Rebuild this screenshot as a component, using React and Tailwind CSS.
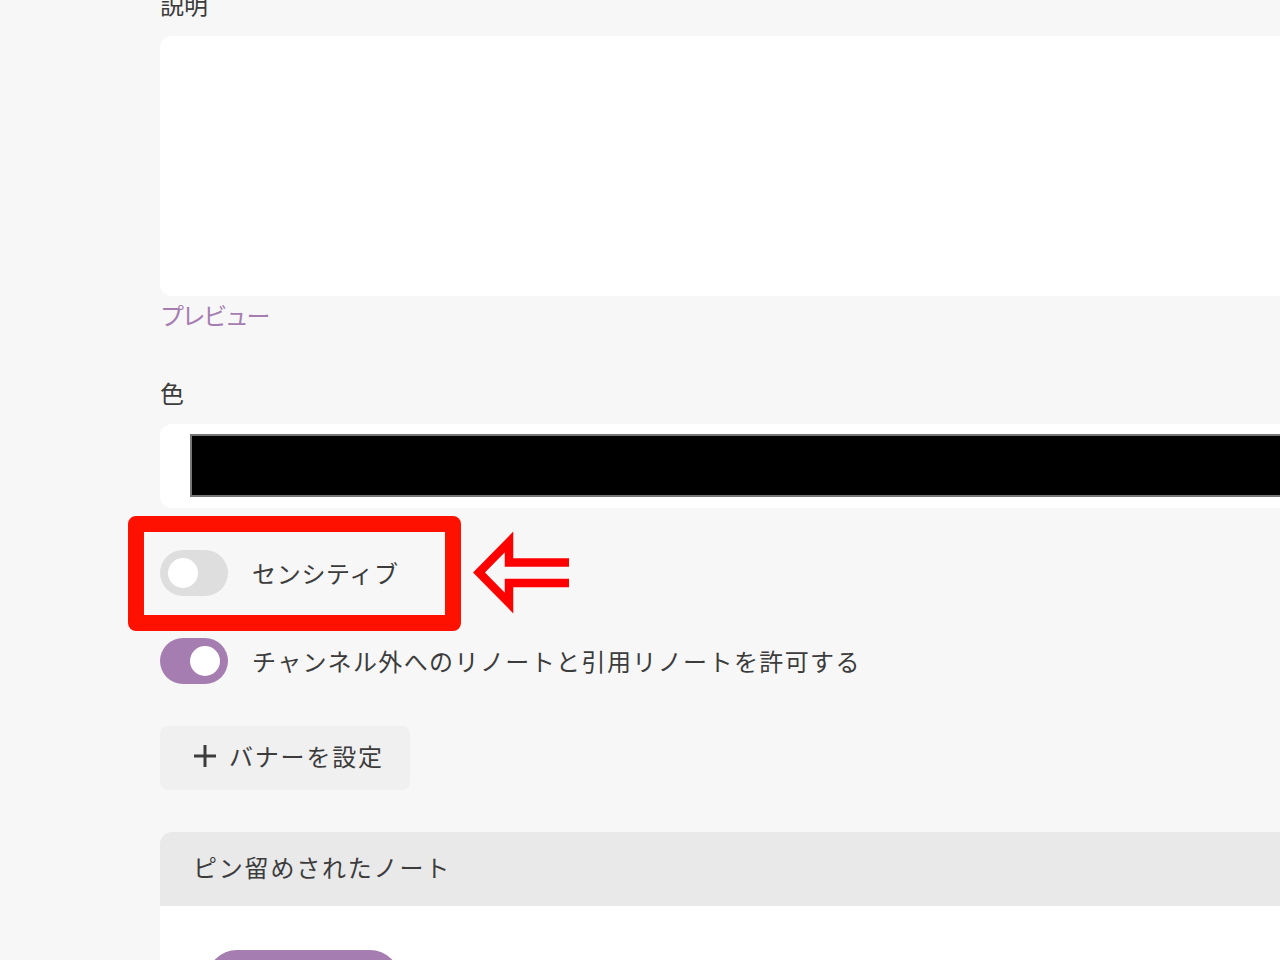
import React from "react";

const font = { fontFamily: '"Noto Sans CJK JP", "Noto Sans", sans-serif' };

function Toggle({ on }) {
  return (
    <div
      className={
        "flex h-[46px] w-[68px] shrink-0 items-center rounded-full px-[8px] " +
        (on ? "justify-end bg-[#a67db0]" : "justify-start bg-[#dedede]")
      }
    >
      <div className="h-[30px] w-[30px] rounded-full bg-white" />
    </div>
  );
}

function SwitchRow({ on, label, tracking }) {
  return (
    <div className="flex items-center gap-[24px] pb-[2px]">
      <Toggle on={on} />
      <span className={"leading-[36px] " + tracking}>{label}</span>
    </div>
  );
}

export default function App() {
  return (
    <div
      className="relative h-[960px] w-[1280px] overflow-hidden bg-[#f7f7f7] text-[24px] text-[#3c3c3c]"
      style={font}
    >
      <div className="ml-[160px] mt-[-14px] flex w-[1200px] flex-col">
        <div className="h-[36px] leading-[36px]">説明</div>
        <div className="mt-[14px] h-[260px] rounded-[12px] bg-white" />
        <div className="mt-[1px] h-[36px] leading-[36px] tracking-[-2.4px] text-[#a67db0]">プレビュー</div>
        <div className="mt-[42px] h-[36px] leading-[36px]">色</div>
        <div className="mt-[13px] flex h-[84px] rounded-[12px] bg-white pb-[11px] pl-[30px] pt-[10px]">
          <div className="w-full border-2 border-[#767676] bg-black" />
        </div>
        <div className="mt-[42px] flex flex-col gap-[40px]">
          <SwitchRow on={false} label="センシティブ" tracking="tracking-[0.7px]" />
          <SwitchRow on={true} label="チャンネル外へのリノートと引用リノートを許可する" tracking="tracking-[1.4px]" />
        </div>
        <div className="mt-[40px] flex h-[64px] w-[250px] items-center gap-[12px] rounded-[8px] bg-[#f0f0f0] pb-[4px] pl-[33px]">
          <svg width="24" height="24" viewBox="0 0 24 24">
            <path d="M12 1v22M1 12h22" stroke="#3c3c3c" strokeWidth="3" fill="none" />
          </svg>
          <span className="leading-[36px] tracking-[1.8px]">バナーを設定</span>
        </div>
        <div className="mt-[42px] flex flex-col overflow-hidden rounded-[12px]">
          <div className="flex h-[74px] items-center bg-[#e9e9e9] pb-[4px] pl-[33px]">
            <span className="leading-[36px] tracking-[1.8px]">ピン留めされたノート</span>
          </div>
          <div className="h-[200px] bg-white pl-[47px] pt-[44px]">
            <div className="h-[60px] w-[193px] rounded-full bg-[#a67db0]" />
          </div>
        </div>
      </div>

      <div className="absolute left-[128px] top-[516px] h-[115px] w-[333px] rounded-[8px] border-[16px] border-[#ff1100]" />
      <svg
        className="absolute left-0 top-0"
        width="1280"
        height="960"
        viewBox="0 0 1280 960"
        style={{ pointerEvents: "none" }}
      >
        <path
          d="M569 562.5 H509 V542 L479 572.5 L509 603 V583 H569"
          stroke="#ff0000"
          strokeWidth="8.5"
          fill="none"
          strokeLinejoin="miter"
        />
      </svg>
    </div>
  );
}
